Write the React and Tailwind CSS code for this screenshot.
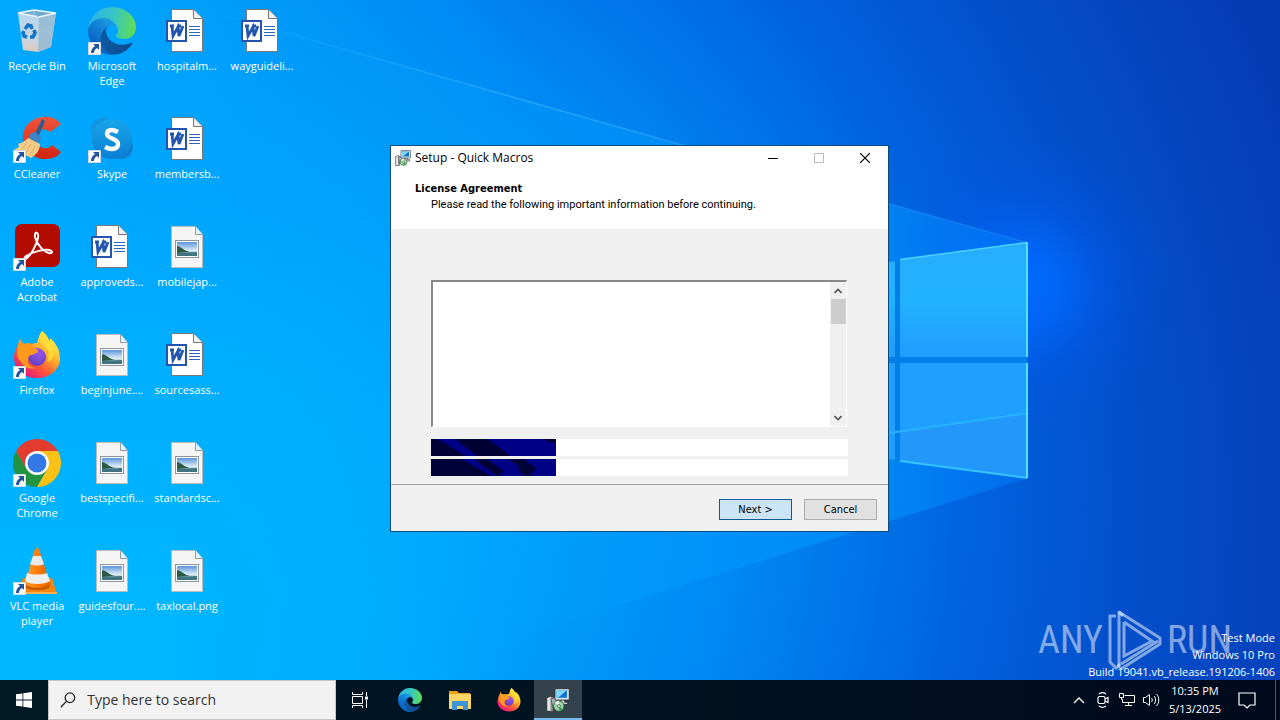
import React from "react";

const EdgeIcon = ({ className }) => (
  <svg viewBox="0 0 256 256" className={className} aria-hidden="true">
    <defs>
      <linearGradient id="edgeDark" x1="60" y1="177" x2="241" y2="177" gradientUnits="userSpaceOnUse">
        <stop offset="0" stopColor="#0c59a4" />
        <stop offset="1" stopColor="#114a8b" />
      </linearGradient>
      <linearGradient id="edgeBlue" x1="155" y1="100" x2="46" y2="220" gradientUnits="userSpaceOnUse">
        <stop offset="0" stopColor="#1b9de2" />
        <stop offset="0.4" stopColor="#1383d8" />
        <stop offset="1" stopColor="#0a5fc0" />
      </linearGradient>
      <linearGradient id="edgeGreen" x1="10" y1="70" x2="250" y2="110" gradientUnits="userSpaceOnUse">
        <stop offset="0" stopColor="#2fb4e8" />
        <stop offset="0.5" stopColor="#36c5c4" />
        <stop offset="1" stopColor="#5fdd55" />
      </linearGradient>
    </defs>
    <path
      fill="url(#edgeDark)"
      d="M231.07 190.54c-3.43 1.8-6.9 3.4-10.54 4.72a101.9 101.9 0 0 1-35.93 6.46c-47.32 0-88.54-32.55-88.54-74.32A31.48 31.48 0 0 1 112.49 100c-42.8 1.8-53.8 46.4-53.8 72.53 0 73.88 68.09 81.37 82.76 81.37 7.91 0 19.84-2.3 27-4.56l1.31-.44a128.34 128.34 0 0 0 66.6-52.8 4 4 0 0 0-5.29-5.56z"
    />
    <path
      fill="url(#edgeBlue)"
      d="M105.73 241.42a79.2 79.2 0 0 1-22.74-21.34 80.72 80.72 0 0 1 29.53-120c3.12-1.47 8.45-4.05 15.54-4.05a32.35 32.35 0 0 1 25.69 13 31.88 31.88 0 0 1 6.36 18.66c0-.21 24.46-79.6-80-79.6-43.9 0-80 41.66-80 78.21a130.15 130.15 0 0 0 12.11 56 128 128 0 0 0 156.38 67.11 75.55 75.55 0 0 1-62.78-8z"
    />
    <path
      fill="url(#edgeGreen)"
      d="M152.33 148.86c-.81 1.05-3.3 2.5-3.3 5.66 0 2.61 1.7 5.12 4.72 7.23 14.38 10 41.49 8.68 41.56 8.68a59.56 59.56 0 0 0 30.27-8.35 61.38 61.38 0 0 0 30.43-52.88c.26-22.41-8-37.31-11.34-43.91C223.46 23.93 177.72 0 128 0A128 128 0 0 0 0 126.2c.48-36.54 36.8-66.05 80-66.05 3.5 0 23.46.34 42 10.07 16.34 8.58 24.9 18.94 30.85 29.21 6.18 10.67 7.28 24.15 7.28 29.52 0 5.37-2.74 13.33-7.8 19.91z"
    />
  </svg>
);

const FirefoxIcon = ({ className }) => (
  <svg viewBox="0 0 48 48" className={className} aria-hidden="true">
    <defs>
      <linearGradient id="foxBody" x1="40" y1="6" x2="10" y2="44" gradientUnits="userSpaceOnUse">
        <stop offset="0" stopColor="#fff04a" />
        <stop offset="0.35" stopColor="#ffb02a" />
        <stop offset="0.65" stopColor="#ff5a36" />
        <stop offset="1" stopColor="#e3157f" />
      </linearGradient>
      <radialGradient id="foxGlobe" cx="0.6" cy="0.3" r="0.8">
        <stop offset="0" stopColor="#9b55f0" />
        <stop offset="1" stopColor="#5b3fb5" />
      </radialGradient>
    </defs>
    <path
      fill="url(#foxBody)"
      d="M29 0c4 3 6 6 7 10 1-1 1-2 1-3 5 4 10 11 10 20 0 12-10 20-23 20S1 39 1 26c0-5 2-9 4-12l2-6c1 2 2 4 4 5 2-1 5-1 8 0 1-1 3-1 5-1 1-4 2-8 5-12z"
    />
    <circle cx="24" cy="26" r="9" fill="url(#foxGlobe)" />
    <path
      fill="#ff9a1f"
      d="M7 8c1 2 2 4 4 5 3-1 6-1 8 0-1 2-1 3 0 4 3 0 5 1 6 2 0 3-4 4-6 5-3 0-4 2-4 5-1 4 3 8 8 8-8 2-14-2-16-8-2-1-4-5-2-15z"
    />
    <path
      fill="#ffe03a"
      d="M29 0c-5 6-2 11 2 14 5 5 6 11 3 17 6-2 8-7 6-13 2 3 3 6 3 10 2-9-2-14-7-18-1-4-3-7-7-10z"
      opacity=".8"
    />
  </svg>
);

const SetupIcon = ({ className }) => (
  <svg viewBox="0 0 32 32" className={className} aria-hidden="true">
    <path d="M1 13l5-2 3 1v19H1z" fill="#e4e4e4" stroke="#222" />
    <path d="M6 12h3v19H6z" fill="#8a8f92" />
    <path d="M7 15l9-5 5 2v14H9z" fill="#aab3b8" stroke="#444" />
    <path d="M20 15h5v4h4v3H16v-3h4z" fill="#c9ced2" stroke="#222" />
    <path d="M12 1h19v15H12z" fill="#dde6ea" stroke="#222" />
    <path d="M14 3h14v10H14z" fill="#0f6fd0" />
    <path d="M14 3h14L16 13h-2z" fill="#7fd8ff" />
    <circle cx="17" cy="24" r="7" fill="#9ad6a6" stroke="#244d2b" />
    <path d="M17 24l-5-4a7 7 0 0 1 5-3z" fill="#f2fff4" />
    <path d="M17 24l5 4a7 7 0 0 1-4 3z" fill="#38a04f" />
    <circle cx="17" cy="24" r="2" fill="#fff" stroke="#244d2b" />
  </svg>
);

const RecycleBinIcon = () => (
  <svg viewBox="0 0 48 48" className="size-12" aria-hidden="true">
    <defs>
      <linearGradient id="binSide" x1="0" y1="0" x2="0" y2="1">
        <stop offset="0" stopColor="#b4d6ee" />
        <stop offset="0.7" stopColor="#c9d5df" />
        <stop offset="1" stopColor="#dfc9bd" />
      </linearGradient>
    </defs>
    <path d="M5 6l16-3 22 3-5 34-13 5-15-2z" fill="url(#binSide)" />
    <path d="M26 9l17-3-5 34-13 5z" fill="#8fb6d2" opacity=".75" />
    <path d="M5 6l16-3 22 3-17 4z" fill="#6fa9d0" stroke="#eef8ff" strokeWidth="1.4" />
    <path d="M21 3v5l5 2" fill="none" stroke="#a9d0ea" />
    <g fill="none" stroke="#1374cb" strokeWidth="3.6">
      <path d="M12 22l3-4 3 1 1 3" />
      <path d="M21 23l1 3-2 4h-3" />
      <path d="M14 30l-3-1-1-3 1-2" />
    </g>
  </svg>
);

const CCleanerIcon = () => (
  <svg viewBox="0 0 48 48" className="size-12" aria-hidden="true">
    <defs>
      <linearGradient id="ccRed" x1="0" y1="0" x2="0" y2="1">
        <stop offset="0" stopColor="#f2553a" />
        <stop offset="1" stopColor="#cf2413" />
      </linearGradient>
    </defs>
    <path
      d="M48 9C43 3 37 1 30 2 18 3 9 12 10 24c1 12 11 20 22 20 7 0 12-2 16-7l-9-7c-3 4-8 4-11 2-4-2-6-6-5-11 1-6 9-9 14-4z"
      fill="url(#ccRed)"
    />
    <path d="M29 4l3 2-7 17-4-2z" fill="#2d5f93" />
    <path d="M17 19l5-2 6 5-1 5-8 3-4-5z" fill="#3f84c4" />
    <path d="M15 23l12 6c0 6-4 11-9 14L1 34c5-1 6-2 4-5 4-1 7-3 10-6z" fill="#f3cd87" />
    <path d="M14 27l-5 7M18 29l-5 9M22 31l-5 9" stroke="#dcb06c" fill="none" />
  </svg>
);

const SkypeIcon = () => (
  <svg viewBox="0 0 48 48" className="size-12" aria-hidden="true">
    <defs>
      <linearGradient id="skypeBg" x1="0" y1="0" x2="0" y2="1">
        <stop offset="0" stopColor="#18a6ea" />
        <stop offset="1" stopColor="#0a7ed2" />
      </linearGradient>
    </defs>
    <circle cx="15" cy="15" r="12" fill="#1592e0" />
    <circle cx="33" cy="32" r="12" fill="#0d80d4" />
    <circle cx="24" cy="24" r="20" fill="url(#skypeBg)" />
    <path
      d="M30 17c-2-1-4-2-6-2-3 0-5 1-5 4 0 5 11 4 11 10 0 4-3 5-6 5s-5-1-7-2"
      fill="none"
      stroke="#fff"
      strokeWidth="4.400"
    />
  </svg>
);

const AcrobatIcon = () => (
  <svg viewBox="0 0 48 48" className="size-12" aria-hidden="true">
    <rect x="2" y="1" width="45" height="43" rx="7" fill="#b30b00" />
    <path
      d="M13 33c-3 3-1 4 1 2 5-4 10-15 11-20 1-7-4-7-3-1 2 8 9 15 14 16 4 1 4-2 0-3-5-1-17 2-23 6z"
      fill="none"
      stroke="#fff"
      strokeWidth="2"
      strokeLinejoin="round"
    />
  </svg>
);

const ChromeIcon = () => (
  <svg viewBox="0 0 48 48" className="size-12" aria-hidden="true">
    <path d="M34.39 30L24 48A24 24 0 0 1 3.22 12L13.6 30z" fill="#229342" />
    <path d="M24 12h20.78A24 24 0 0 1 24 48l10.39-18z" fill="#fbc116" />
    <path d="M24 12h20.78A24 24 0 0 0 3.22 12L13.6 30z" fill="#e33b2e" />
    <circle cx="24" cy="24" r="12" fill="#fff" />
    <circle cx="24" cy="24" r="9.5" fill="#3478e8" />
  </svg>
);

const VlcIcon = () => (
  <svg viewBox="0 0 48 48" className="size-12" aria-hidden="true">
    <defs>
      <linearGradient id="vlcOrange" x1="0" y1="0" x2="1" y2="0">
        <stop offset="0" stopColor="#ff9a2a" />
        <stop offset="0.5" stopColor="#ff7d08" />
        <stop offset="1" stopColor="#e35f00" />
      </linearGradient>
    </defs>
    <path d="M10 31h29l5 16H4z" fill="#f78410" />
    <path d="M4 45h40v2H4z" fill="#ffb04d" />
    <path d="M11 36h27l-2 5c-6 3-17 3-23 0z" fill="#c85a00" />
    <path d="M22 2q2-2 4 0l11 35c-5 5-20 5-25 0z" fill="url(#vlcOrange)" />
    <path d="M20 9h8l3 8c-4 2-10 2-14 0z" fill="#e9e9e9" />
    <path d="M14 26c6 2 14 2 20 0l3 8c-5 4-20 4-25 0z" fill="#eee" />
  </svg>
);

const WordIcon = () => (
  <svg viewBox="0 0 48 48" className="size-12" aria-hidden="true">
    <path d="M8.500 2.500h22l9 9v33h-31z" fill="#fff" stroke="#777" />
    <path d="M30.500 2.500v9h9" fill="#f0f0f0" stroke="#777" />
    <path d="M26 19.500h11M26 22.500h11M26 25.500h11M26 28.500h11" stroke="#2d67b8" />
    <rect x="4" y="14" width="19" height="20" fill="#fff" stroke="#2455ad" strokeWidth="2" />
    <path d="M7 19h4M14 19h4M9 19l1 10 5-9 1 9 4-10" stroke="#2455ad" strokeWidth="2.800" fill="none" />
  </svg>
);

const ImageIcon = () => (
  <svg viewBox="0 0 48 48" className="size-12" aria-hidden="true">
    <defs>
      <linearGradient id="photoSky" x1="0" y1="0" x2="0" y2="1">
        <stop offset="0" stopColor="#5b95dc" />
        <stop offset="0.6" stopColor="#dcecf5" />
        <stop offset="1" stopColor="#4b8c9c" />
      </linearGradient>
    </defs>
    <path d="M8.500 3.500h24l7 8v33h-31z" fill="#f5f5f5" stroke="#bbb" />
    <path d="M32.500 3.500v8h7" fill="#dff2ff" stroke="#999" />
    <rect x="12.500" y="17.500" width="23" height="17" fill="#fff" stroke="#8b96a0" />
    <path d="M14 19h20v14H14z" fill="url(#photoSky)" />
    <path d="M14 23c5 1 7 5 13 6l-13 1z" fill="#2b5a44" />
    <path d="M14 30l20-1v4H14z" fill="#3f7481" />
  </svg>
);

const ShortcutArrow = () => (
  <svg viewBox="0 0 13 13" className="absolute bottom-0 left-0 size-[13px]" aria-hidden="true">
    <path d="M.5.5h12v12H.5z" fill="#fff" stroke="#cdd8e4" />
    <path d="M5 2h6v6L9 6C7 7 6 9 6 11H3c0-3 1-5 4-7z" fill="#23549c" />
  </svg>
);

const icons = [
  { label: "Recycle Bin", Icon: RecycleBinIcon },
  { label: "CCleaner", Icon: CCleanerIcon, shortcut: true },
  { label: "Adobe Acrobat", Icon: AcrobatIcon, shortcut: true },
  { label: "Firefox", Icon: () => <FirefoxIcon className="size-12" />, shortcut: true },
  { label: "Google Chrome", Icon: ChromeIcon, shortcut: true },
  { label: "VLC media player", Icon: VlcIcon, shortcut: true },
  { label: "Microsoft Edge", Icon: () => <EdgeIcon className="size-12" />, shortcut: true },
  { label: "Skype", Icon: SkypeIcon, shortcut: true },
  { label: "approveds...", Icon: WordIcon },
  { label: "beginjune....", Icon: ImageIcon },
  { label: "bestspecifi...", Icon: ImageIcon },
  { label: "guidesfour....", Icon: ImageIcon },
  { label: "hospitalm...", Icon: WordIcon },
  { label: "membersb...", Icon: WordIcon },
  { label: "mobilejap...", Icon: ImageIcon },
  { label: "sourcesass...", Icon: WordIcon },
  { label: "standardsc...", Icon: ImageIcon },
  { label: "taxlocal.png", Icon: ImageIcon },
  { label: "wayguideli...", Icon: WordIcon },
];

const Wallpaper = () => (
  <svg
    viewBox="0 0 1280 720"
    preserveAspectRatio="xMidYMid slice"
    className="absolute inset-0 h-full w-full"
    aria-hidden="true"
  >
    <defs>
      <radialGradient id="sky" cx="200" cy="500" r="1150" gradientUnits="userSpaceOnUse">
        <stop offset="0" stopColor="#00b6ff" />
        <stop offset="0.25" stopColor="#00a6ff" />
        <stop offset="0.48" stopColor="#0086f2" />
        <stop offset="0.66" stopColor="#0064e0" />
        <stop offset="0.8" stopColor="#0450cc" />
        <stop offset="1" stopColor="#043cb6" />
      </radialGradient>
      <linearGradient id="skyLeft" x1="0" y1="0" x2="520" y2="0" gradientUnits="userSpaceOnUse">
        <stop offset="0" stopColor="#00a9ff" />
        <stop offset="0.4" stopColor="#00a6ff" stopOpacity=".7" />
        <stop offset="1" stopColor="#009cfa" stopOpacity="0" />
      </linearGradient>
      <linearGradient id="skyLow" x1="0" y1="200" x2="0" y2="600" gradientUnits="userSpaceOnUse">
        <stop offset="0" stopColor="#00b6ff" stopOpacity="0" />
        <stop offset="1" stopColor="#00b6ff" />
      </linearGradient>
      <linearGradient id="fadeRight" x1="0" y1="0" x2="520" y2="0" gradientUnits="userSpaceOnUse">
        <stop offset="0.3" stopColor="#fff" />
        <stop offset="1" stopColor="#fff" stopOpacity="0" />
      </linearGradient>
      <mask id="lowMask">
        <path d="M0 0h520v720H0z" fill="url(#fadeRight)" />
      </mask>
      <radialGradient id="glow" cx="1025" cy="285" r="150" gradientUnits="userSpaceOnUse">
        <stop offset="0" stopColor="#006cff" />
        <stop offset="0.3" stopColor="#0068ff" stopOpacity=".7" />
        <stop offset="0.6" stopColor="#005cf0" stopOpacity=".3" />
        <stop offset="1" stopColor="#0055e0" stopOpacity="0" />
      </radialGradient>
      <linearGradient id="beam" x1="250" y1="0" x2="1028" y2="0" gradientUnits="userSpaceOnUse">
        <stop offset="0" stopColor="#00a8ff" stopOpacity="0" />
        <stop offset="0.8" stopColor="#0098ff" stopOpacity=".6" />
        <stop offset="1" stopColor="#0080ff" stopOpacity=".4" />
      </linearGradient>
      <linearGradient id="ray" x1="200" y1="0" x2="1028" y2="0" gradientUnits="userSpaceOnUse">
        <stop offset="0" stopColor="#4cc0ff" stopOpacity="0" />
        <stop offset="0.4" stopColor="#4cc0ff" stopOpacity=".5" />
        <stop offset="1" stopColor="#2ca0ff" stopOpacity=".3" />
      </linearGradient>
      <linearGradient id="pane" x1="0" y1="0" x2="0" y2="1">
        <stop offset="0" stopColor="#27adff" />
        <stop offset="0.5" stopColor="#22b2ff" />
        <stop offset="1" stopColor="#219dff" />
      </linearGradient>
    </defs>
    <path d="M0 0h1280v720H0z" fill="url(#sky)" />
    <path d="M0 0h520v720H0z" fill="url(#skyLeft)" />
    <path d="M0 0h520v720H0z" fill="url(#skyLow)" mask="url(#lowMask)" />
    <path d="M870 130h320v310H870z" fill="url(#glow)" />
    <path d="M170 0L1028 243V478L250 720H0V0z" fill="url(#beam)" />
    <path d="M170 0L1028 243" stroke="url(#ray)" strokeWidth="1.500" />
    <path d="M780 275l247-32v235l-247-32z" fill="#007fe8" />
    <path d="M780 278l115-17v96H780zM900 259.500l128-17v114.500H900z" fill="url(#pane)" />
    <path d="M780 363h115v97l-115-16zM900 363h128v115l-128-17z" fill="#1f9fff" />
    <path d="M900 431l128-18v65l-128-17z" fill="#2498fa" />
    <path d="M889 433l139-20" stroke="#27b4ff" strokeWidth="2" />
    <path d="M900 259.500l127-17" stroke="#4cd2ff" strokeWidth="1.500" />
    <path d="M900 461l127 17" stroke="#35c4ff" strokeWidth="2" />
    <path d="M1027 242.500v114.500M1027 363v115" stroke="#4ee4ff" strokeWidth="2" />
  </svg>
);

const DesktopIcon = ({ label, Icon, shortcut }) => (
  <button type="button" className="flex w-[74px] flex-col items-center gap-[3px]">
    <span className="relative block">
      <Icon />
      {shortcut && <ShortcutArrow />}
    </span>
    <span className="text-center text-[11px] leading-[15px] text-white">{label}</span>
  </button>
);

const ProgressFill = ({ value, shift }) => (
  <div role="progressbar" aria-label="Progress" aria-valuenow={value} className="h-[17px] bg-white">
    <div className="h-full overflow-hidden bg-[#000086]" style={{ width: `${value}%` }}>
      <svg viewBox="0 0 124 17" preserveAspectRatio="none" className="h-full w-full" aria-hidden="true">
        {shift ? (
          <path d="M0 0h30l30 17H0zM44 0h12l16 12-4 5h-2L50 6zM76 0h16l12 9-4 6zM88 4l12 13h-8l-6-8z" fill="#000038" />
        ) : (
          <path d="M0 0v17h34L10 2 4 0zM24 0h32l14 10 8 7H46zM110 0h14v5z" fill="#000034" />
        )}
      </svg>
    </div>
  </div>
);

const SetupWindow = () => (
  <section
    aria-label="Setup - Quick Macros"
    className="absolute top-[145px] left-[390px] flex w-[499px] flex-col border border-[#0c4a80] bg-[#f0f0f0] font-['DejaVu_Sans_Condensed','DejaVu_Sans',sans-serif] text-[11px] text-black"
  >
    <header className="bg-white pb-4">
      <div className="flex h-6 items-center pl-1 font-['Open_Sans',sans-serif] text-xs">
        <SetupIcon className="size-4" />
        <h1 className="flex-1 pl-1">Setup - Quick Macros</h1>
        <button type="button" aria-label="Minimize" className="flex h-6 w-[46px] items-center justify-center">
          <svg viewBox="0 0 10 10" className="size-[10px]">
            <path d="M0 5.500h10" stroke="#000" />
          </svg>
        </button>
        <button type="button" aria-label="Maximize" disabled className="flex h-6 w-[46px] items-center justify-center">
          <svg viewBox="0 0 10 10" className="size-[10px]">
            <path d="M.5.5h9v9h-9z" stroke="#bbb" fill="none" />
          </svg>
        </button>
        <button type="button" aria-label="Close" className="flex h-6 w-[46px] items-center justify-center">
          <svg viewBox="0 0 10 10" className="size-[10px]">
            <path d="M0 0l10 10M10 0L0 10" stroke="#000" strokeWidth="1.200" />
          </svg>
        </button>
      </div>
      <h2 className="mt-[11px] pl-6 leading-4 font-bold">License Agreement</h2>
      <p className="pl-10 font-['Roboto',sans-serif] leading-4">
        Please read the following important information before continuing.
      </p>
    </header>
    <div className="px-10 pt-[51px] pb-2">
      <div className="mr-px flex h-[147px] border-t-2 border-r border-b border-l-2 border-t-[#888] border-r-white border-b-white border-l-[#888] bg-white">
        <textarea aria-label="License text" readOnly className="min-w-0 flex-1 resize-none bg-white outline-none" />
        <div className="flex w-4 flex-col items-center bg-[#f0f0f0]">
          <button type="button" aria-label="Scroll up" className="flex h-[17px] items-center justify-center">
            <svg viewBox="0 0 8 6" className="h-[6px] w-2">
              <path d="M.5 5L4 1.500 7.500 5" stroke="#555" strokeWidth="1.600" fill="none" />
            </svg>
          </button>
          <div className="h-[25px] w-[15px] bg-[#cdcdcd]" />
          <button type="button" aria-label="Scroll down" className="mt-auto flex h-[17px] items-center justify-center">
            <svg viewBox="0 0 8 6" className="h-[6px] w-2">
              <path d="M.5 1L4 4.500 7.500 1" stroke="#555" strokeWidth="1.600" fill="none" />
            </svg>
          </button>
        </div>
      </div>
      <div className="mt-3 flex flex-col gap-[3px]">
        <ProgressFill value={30} />
        <ProgressFill value={30} shift />
      </div>
    </div>
    <footer className="flex justify-end gap-3 border-t border-[#a0a0a0] px-[11px] pt-[14px] pb-[11px]">
      <button type="button" className="h-[21px] w-[73px] border border-[#0a5a9c] bg-[#cce4f7] pt-[2px]">
        Next &gt;
      </button>
      <button type="button" className="h-[21px] w-[73px] border border-[#adadad] bg-[#e1e1e1] pt-[2px]">
        Cancel
      </button>
    </footer>
  </section>
);

const Watermark = () => (
  <div className="absolute right-[48px] bottom-[8px] flex items-center gap-1 font-['Roboto_Condensed','Liberation_Sans_Narrow',sans-serif] text-[38px] leading-[64px] text-white/50">
    <span>ANY</span>
    <svg viewBox="0 0 56 64" className="h-16 w-14" fill="none" stroke="#fff" strokeOpacity=".5" strokeWidth="3" aria-hidden="true">
      <path d="M9 8H3v46l6 6 4-4" />
      <path d="M12 60V4l41 26v6L14 61" strokeLinejoin="round" />
      <path d="M17 14v34l28-15L17 14M12 4l4 4M14 56l37-23" />
    </svg>
    <span>RUN</span>
  </div>
);

const Taskbar = () => (
  <footer className="relative bg-linear-to-r from-[#001a26] to-[#000a1c] text-white">
    <div className="flex h-10 w-full items-stretch">
      <button type="button" aria-label="Start" className="flex w-12 items-center justify-center">
        <svg viewBox="0 0 16 16" className="size-4" fill="#fff">
          <path d="M0 2.300L6.500 1.400v6.200H0zM7.300 1.300L16 0v7.600H7.300zM0 8.400h6.500v6.200L0 13.700zM7.300 8.400H16V16l-8.700-1.300z" />
        </svg>
      </button>
      <label className="flex w-[288px] items-center gap-[11px] border border-[#c8c8c8] bg-[#f2f2f2] pl-[11px]">
        <svg viewBox="0 0 18 18" className="size-[18px]" fill="none" stroke="#222" strokeWidth="1.400">
          <circle cx="11" cy="6.500" r="5.300" />
          <path d="M7 10.500L1 17" />
        </svg>
        <input
          type="text"
          aria-label="Search"
          placeholder="Type here to search"
          className="w-full bg-transparent text-sm text-black outline-none placeholder:text-[#333]"
        />
      </label>
      <nav aria-label="Taskbar apps" className="flex gap-px">
        <button type="button" aria-label="Task View" className="flex w-12 items-center justify-center">
          <svg viewBox="0 0 18 16" className="h-4 w-[18px]" fill="none" stroke="#fff">
            <path d="M1.500 0v2.500h10V0M1.500 16v-2.500h10V16M1.500 4.500h10v7h-10zM15.500 0v4M15.500 8v8" />
            <path d="M14 4.500h3v3h-3z" fill="#fff" stroke="none" />
          </svg>
        </button>
        <button type="button" aria-label="Microsoft Edge" className="flex w-[50px] items-center justify-center">
          <EdgeIcon className="size-6" />
        </button>
        <button type="button" aria-label="File Explorer" className="flex w-12 items-center justify-center">
          <svg viewBox="0 0 24 24" className="size-6">
            <path d="M1 3h8l2 2h11v16H1z" fill="#e8a317" />
            <path d="M1 6h22v15H1z" fill="#ffd563" />
            <path d="M4 22v-9h16v9h-5v-4H9v4z" fill="#3b94d6" />
          </svg>
        </button>
        <button type="button" aria-label="Firefox" className="flex w-12 items-center justify-center">
          <FirefoxIcon className="size-6" />
        </button>
        <button
          type="button"
          aria-label="Setup - Quick Macros"
          className="flex w-12 items-center justify-center border-b-2 border-[#76b9ed] bg-[#33424c] pt-[2px]"
        >
          <SetupIcon className="size-6" />
        </button>
      </nav>
      <div className="ml-auto flex items-center">
        <button type="button" aria-label="Show hidden icons" className="flex w-6 justify-center">
          <svg viewBox="0 0 12 8" className="h-2 w-3" fill="none" stroke="#fff" strokeWidth="1.300">
            <path d="M1 7l5-5 5 5" />
          </svg>
        </button>
        <button type="button" aria-label="Meet Now" className="flex w-6 justify-center">
          <svg viewBox="0 0 16 16" className="size-4" fill="none" stroke="#fff" strokeWidth="1.200">
            <rect x="3" y="4.500" width="7" height="7" rx="1.500" />
            <path d="M10 7l3-1.500v5L10 9M4 2c2-1.500 5-1.500 7 0M4 14c2 1.500 5 1.500 7 0" />
          </svg>
        </button>
        <button type="button" aria-label="Network" className="flex w-6 justify-center">
          <svg viewBox="0 0 16 16" className="size-4" fill="none" stroke="#fff">
            <path d="M5.500 3.500h10v7h-12v-3M9.500 10.500v3M6 13.500h7M.5 1.500h4v4h-4zM2.500 5.500v2h1" />
          </svg>
        </button>
        <button type="button" aria-label="Volume" className="flex w-6 justify-center">
          <svg viewBox="0 0 18 16" className="h-4 w-[18px]" fill="none" stroke="#fff">
            <path d="M1.500 5.500h2l4-3v11l-4-3h-2zM9.500 6c1 1 1 3 0 4M12 4c2 2 2 6 0 8M14.500 2c3 3 3 9 0 12" />
          </svg>
        </button>
        <time className="w-16 text-center text-[11px] leading-[18px]">
          10:35 PM
          <br />
          5/13/2025
        </time>
        <button type="button" aria-label="Notifications" className="flex w-10 justify-center">
          <svg viewBox="0 0 18 18" className="size-[18px]" fill="none" stroke="#fff" strokeWidth="1.200">
            <path d="M1 2h16v12h-5l-3 3-3-3H1z" />
          </svg>
        </button>
        <div className="ml-2 h-10 w-[5px] border-l border-[#556]" />
      </div>
    </div>
  </footer>
);

const App = () => {
  return (
    <div className="relative flex min-h-screen flex-col overflow-hidden bg-[#0090f5] font-['Open_Sans','Noto_Sans',sans-serif]">
      <Wallpaper />
      <main className="relative flex flex-1 flex-col items-start">
        <div className="grid auto-cols-[75px] grid-flow-col grid-rows-[repeat(6,108px)] pt-[7px]">
          {icons.map((icon) => (
            <DesktopIcon key={icon.label} {...icon} />
          ))}
        </div>
        <Watermark />
        <div className="absolute right-[5px] bottom-0 text-right text-[11px] leading-[17px] text-white">
          <p>Test Mode</p>
          <p>Windows 10 Pro</p>
          <p>Build 19041.vb_release.191206-1406</p>
        </div>
        <SetupWindow />
      </main>
      <Taskbar />
    </div>
  );
};

export default App;
